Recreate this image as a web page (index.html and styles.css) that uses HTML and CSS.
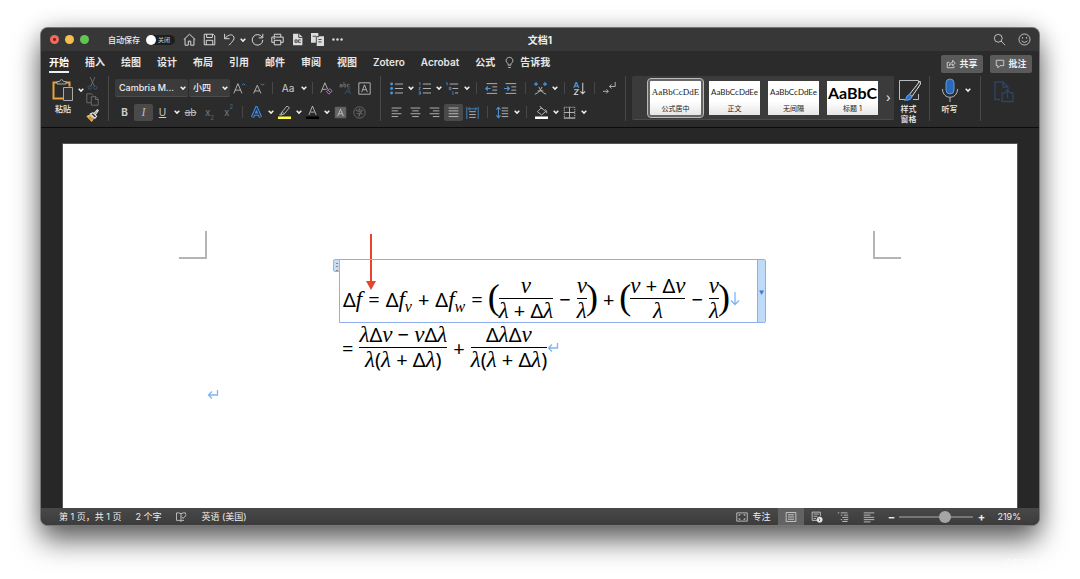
FILE: index.html
```html
<!DOCTYPE html>
<html lang="zh-CN">
<head>
<meta charset="utf-8">
<title>文档1</title>
<link rel="stylesheet" href="styles.css">
</head>
<body>
<svg class="sprite" aria-hidden="true">
  <symbol id="chev" viewBox="0 0 8 8"><path d="M1.700 2.800l2.300 2.300 2.300-2.300" fill="none" stroke="#f0f0f0" stroke-width="1.5"/></symbol>
  <symbol id="return" viewBox="0 0 12 12"><path d="M10.500 1v5H1.500M5 2.500L1.500 6 5 9.500" fill="none" stroke="#7db4f5" stroke-width="1.300"/></symbol>
</svg>
<div class="window">
  <header class="titlebar">
    <div class="lights"><i class="light red"></i><i class="light yellow"></i><i class="light green"></i></div>
    <label class="autosave">自动保存 <span class="toggle"><input type="checkbox" aria-label="自动保存"><span>关闭</span></span></label>
    <div class="quick">
      <button aria-label="主页"><svg viewBox="0 0 16 16"><path d="M1 8L8 1.500 15 8M2.500 7v8h4V10h3v5h4V7"/></svg></button>
      <button aria-label="保存"><svg viewBox="0 0 16 16"><path d="M1.500 1.500h11l2 2v11h-13zM4.500 1.500v4h7V1.500M4 14.500v-5.500h8v5.500"/></svg></button>
      <button aria-label="撤销"><svg viewBox="0 0 16 16"><path d="M2 1v6h6M2 7C6 2.500 10 1 12.500 3.500 15.500 7 12 10 7.500 15"/></svg></button>
      <button class="drop" aria-label="撤销选项"><svg><use href="#chev"/></svg></button>
      <button aria-label="重做"><svg viewBox="0 0 16 16"><path d="M13.500 5A6.500 6.500 0 1 0 14.500 8.500M14.500 1v5H9.500"/></svg></button>
      <button aria-label="打印"><svg viewBox="0 0 16 16"><path d="M4 5V1.500h8v3.500M4 11.500H1V5h14v6.500H12M4 9h8v5.500H4zM3 7h2"/></svg></button>
      <button aria-label="导出"><svg viewBox="0 0 16 16"><path class="solid" d="M2.500 1H10l4 4v10H2.500z"/><path stroke="#444" d="M9.500 1v4.500h4.500M5 8.500h2.500v3H5zM9 8.500h3M9 11.500h3M9 8.500v3"/></svg></button>
      <button aria-label="比较"><svg viewBox="0 0 16 16"><path class="solid" d="M0 0h9v4h7v12H7v-4H0z"/><path stroke="#444" d="M6.500 13V4.500H10M2 4h4M9 8h4M9 11h4"/></svg></button>
      <button aria-label="更多"><svg viewBox="0 0 16 16"><g class="solid"><circle cx="3" cy="8" r="1.500"/><circle cx="8" cy="8" r="1.500"/><circle cx="13" cy="8" r="1.500"/></g></svg></button>
    </div>
    <h1>文档1</h1>
    <div class="tools">
      <button aria-label="搜索"><svg viewBox="0 0 16 16"><circle cx="6.500" cy="6.500" r="4.800"/><path d="M10 10l5 5"/></svg></button>
      <button aria-label="反馈"><svg viewBox="0 0 16 16"><circle cx="8" cy="8" r="6.800"/><path d="M4.500 9.500q3.500 4 7 0M5.500 5v2M10.500 5v2"/></svg></button>
    </div>
  </header>

  <nav class="tabs">
    <a href="#" class="active">开始</a><a href="#">插入</a><a href="#">绘图</a><a href="#">设计</a><a href="#">布局</a><a href="#">引用</a><a href="#">邮件</a><a href="#">审阅</a><a href="#">视图</a><a href="#">Zotero</a><a href="#">Acrobat</a><a href="#">公式</a>
    <a href="#" class="tell"><svg viewBox="0 0 10 14"><path d="M3.500 10V8.500C1 6.500 1 4.500 1.500 3.500 3 .5 7 .5 8.500 3.500 9 4.500 9 6.500 6.500 8.500V10zM3.500 12.500h3"/></svg>告诉我</a>
    <div class="actions">
      <button><svg viewBox="0 0 12 12"><path d="M4 4H1.500v6.500h8V8M4 8c0-3 2-4 4-4V1.500L11 5 8 8V6C6 6 5 7 4 8z"/></svg>共享</button>
      <button><svg viewBox="0 0 12 12"><path d="M1.500 1.500h9v6.500H6L3.500 10.500V8h-2z"/></svg>批注</button>
    </div>
  </nav>

  <section class="ribbon">
    <div class="clipboard">
      <button class="big" aria-label="粘贴"><svg viewBox="0 0 24 24"><path d="M6 4.500H2.500v16H12M15 4.500h3.500v4" stroke="#e9a13b" stroke-width="2"/><path d="M6 6V3.500h2.500q2-4 4 0H15V6zM12.500 9.500h9v13h-9z" fill="#333" stroke="#aaa"/></svg><span>粘贴</span></button>
      <button class="drop" aria-label="粘贴选项"><svg><use href="#chev"/></svg></button>
      <div class="stack">
        <button aria-label="剪切"><svg viewBox="0 0 16 16"><path stroke="#777" d="M5 0l5 11M11 0L6 11"/><g stroke="#45617c"><circle cx="4.500" cy="13" r="2"/><circle cx="11.500" cy="13" r="2"/></g></svg></button>
        <button aria-label="复制"><svg viewBox="0 0 16 16"><path stroke="#777" d="M6 12H1V1h6l2 2M6.500 4.500H12l3 3v7.500H6.500zM11.500 4.500V8H15"/></svg></button>
        <button aria-label="格式刷"><svg viewBox="0 0 16 16"><path fill="#efb75f" stroke="#efb75f" d="M1 9l5-2.500 4 4-3 5z"/><path stroke="#ddd" stroke-width="1.500" d="M5.500 6l5.500 5.500L13 9 8.500 4.500zM10 5.500L14 1l1 1-3.500 5"/><path stroke="#553a14" d="M4 11l2-1M6 13l2-2"/></svg></button>
      </div>
    </div>
    <i class="divider"></i>

    <div class="group font">
      <div class="row">
        <label class="combo family"><select aria-label="字体"><option>Cambria M...</option></select><svg><use href="#chev"/></svg></label>
        <label class="combo size"><select aria-label="字号"><option>小四</option></select><svg><use href="#chev"/></svg></label>
        <button aria-label="增大字号"><svg viewBox="0 0 16 16"><path d="M1 14L6 2l5 12M2.500 10h7"/><path class="blue" d="M11 4l2-2 2 2"/></svg></button>
        <button aria-label="减小字号"><svg viewBox="0 0 16 16"><path d="M2 14L6.500 4 11 14M3.500 11h6"/><path class="blue" d="M11 2l2 2 2-2"/></svg></button>
        <i class="sep"></i>
        <button class="case">Aa</button><button class="drop" aria-label="大小写选项"><svg><use href="#chev"/></svg></button>
        <i class="sep"></i>
        <button aria-label="清除格式"><svg viewBox="0 0 16 16"><path d="M1 13L6 1l3.500 8M3 9h5"/><path stroke="#c58bd8" d="M8 12l4-4 3 3-4 4zM10 10l3 3"/></svg></button>
        <button class="dim" aria-label="拼音指南"><svg viewBox="0 0 16 16"><path d="M1 3h3v3H1V4.500h3M6 0v6h2.500V3H6M13 3h-2.500v3H13"/><path class="blue" d="M7 15l5-8 2 8M9 12h4"/></svg></button>
        <button aria-label="字符边框"><svg viewBox="0 0 16 16"><path d="M1 1h14v14H1zM4.500 12.500L8 3.500l3.500 9M6 9.500h4"/></svg></button>
      </div>
      <div class="row">
        <button class="bold">B</button><button class="italic on">I</button><button class="under">U</button><button class="drop" aria-label="下划线选项"><svg><use href="#chev"/></svg></button>
        <button class="strike">ab</button>
        <button class="script">x<sub>2</sub></button><button class="script">x<sup>2</sup></button>
        <i class="sep"></i>
        <button aria-label="文本效果"><svg viewBox="0 0 16 16"><path d="M3 14L8 2.500 13 14M5 10h6" stroke="#3f8fe0" stroke-width="4"/><path d="M3 14L8 2.500 13 14M5 10h6" stroke="#253648" stroke-width="1.500"/></svg></button><button class="drop" aria-label="文本效果选项"><svg><use href="#chev"/></svg></button>
        <button aria-label="突出显示"><svg viewBox="0 0 16 16"><path d="M4 8.500L11 0l3 2-6.500 8-3 .5zM5.500 7.500l2 2M4 9L2 11h3"/><path d="M0 14.500h16" stroke="#ffff45" stroke-width="3"/></svg></button><button class="drop" aria-label="突出显示选项"><svg><use href="#chev"/></svg></button>
        <button aria-label="字体颜色"><svg viewBox="0 0 16 16"><path d="M3.500 11L8 0l4.500 11M5.500 7.500h5"/><path d="M0 14.500h16" stroke="#000" stroke-width="3"/></svg></button><button class="drop" aria-label="字体颜色选项"><svg><use href="#chev"/></svg></button>
        <button aria-label="字符底纹"><svg viewBox="0 0 16 16"><path fill="#666" stroke="#666" d="M1.500 1.500h13v13h-13z"/><path d="M4.500 12.500L8 4l3.500 8.500M6 9.500h4"/></svg></button>
        <button class="dim" aria-label="带圈字符"><svg viewBox="0 0 16 16"><circle cx="8" cy="8" r="7"/><path d="M8 3v2M4 6.500V5h8v1.500M5.500 7h5L8 9v3.500L6.500 12M4 9.500h8"/></svg></button>
      </div>
    </div>
    <i class="divider"></i>

    <div class="group para">
      <div class="row">
        <button aria-label="项目符号"><svg viewBox="0 0 16 16"><path d="M6 2.500h10M6 8h10M6 13.500h10"/><g fill="#4b93d9" stroke="none"><circle cx="2" cy="2.500" r="1.800"/><circle cx="2" cy="8" r="1.800"/><circle cx="2" cy="13.500" r="1.800"/></g></svg></button><button class="drop" aria-label="项目符号选项"><svg><use href="#chev"/></svg></button>
        <button aria-label="编号"><svg viewBox="0 0 16 16"><path d="M6 2.500h10M6 8h10M6 13.500h10"/><path class="blue" d="M1 1h1.500v3M1 6.500h2L1 9.500h2M1 12h2v3H1M1 13.500h2"/></svg></button><button class="drop" aria-label="编号选项"><svg><use href="#chev"/></svg></button>
        <button aria-label="多级列表"><svg viewBox="0 0 16 16"><path d="M4.500 2.500H15M8 8h7M11 13.500h4"/><path class="blue" d="M0 1h1.500v3M4 6.500h2v3H4zM8.500 11.500V16"/></svg></button><button class="drop" aria-label="多级列表选项"><svg><use href="#chev"/></svg></button>
        <i class="sep"></i>
        <button aria-label="减少缩进"><svg viewBox="0 0 16 16"><path d="M2 2h13M9 6h6M9 10h6M2 14h13"/><path class="blue" stroke-width="1.500" d="M7 8H1M3.500 5.500L1 8l2.500 2.500"/></svg></button>
        <button aria-label="增加缩进"><svg viewBox="0 0 16 16"><path d="M2 2h13M9 6h6M9 10h6M2 14h13"/><path class="blue" stroke-width="1.500" d="M0 8h6.500M4 5.500L6.500 8 4 10.500"/></svg></button>
        <i class="sep"></i>
        <button aria-label="中文版式"><svg viewBox="0 0 16 16"><path d="M1 15q6-2 9-9M6 6q3 7 9 9M4.500 11h7"/><path class="blue" stroke-width="1.500" d="M0 2.500h5M2.500 0v5M11 2.500h5M13.500 0v5"/></svg></button><button class="drop" aria-label="版式选项"><svg><use href="#chev"/></svg></button>
        <i class="sep"></i>
        <button aria-label="排序"><svg viewBox="0 0 16 16"><path class="blue" stroke-width="1.500" d="M1 7l3-7 3 7M2.500 5h3"/><path stroke-width="1.300" d="M1.500 9.500h5L1.500 15.500h5M12 1v13.500M9 11.500l3 3 3-3"/></svg></button>
        <i class="sep"></i>
        <button aria-label="显示编辑标记"><svg viewBox="0 0 16 16"><path d="M15 0v5.500H8M10.500 3L8 5.500 10.500 8M0 11.500h6.500M4 9l2.500 2.500L4 14"/></svg></button>
      </div>
      <div class="row">
        <button aria-label="左对齐"><svg viewBox="0 0 16 16"><path d="M2 2.500h12M2 6h8M2 9.500h12M2 13h8"/></svg></button>
        <button aria-label="居中"><svg viewBox="0 0 16 16"><path d="M2 2.500h12M4 6h8M2 9.500h12M4 13h8"/></svg></button>
        <button aria-label="右对齐"><svg viewBox="0 0 16 16"><path d="M2 2.500h12M6 6h8M2 9.500h12M6 13h8"/></svg></button>
        <button class="on" aria-label="两端对齐"><svg viewBox="0 0 16 16"><path d="M2 2.500h12M2 6h12M2 9.500h12M2 13h12"/></svg></button>
        <button aria-label="分散对齐"><svg viewBox="0 0 16 16"><path d="M4 7h8M4 10.500h8M4 14h8"/><path class="blue" d="M1 1v15M15 1v15M3 3.500h10M5 1.500l-2 2 2 2M11 1.500l2 2-2 2"/></svg></button>
        <i class="sep"></i>
        <button aria-label="行距"><svg viewBox="0 0 16 16"><path d="M7 2.500h8M7 6h8M7 9.500h8M7 13h8"/><path class="blue" stroke-width="1.300" d="M3 1.500v13M.5 4.500L3 1.500l2.500 3M.5 11.500l2.500 3 2.500-3"/></svg></button><button class="drop" aria-label="行距选项"><svg><use href="#chev"/></svg></button>
        <i class="sep"></i>
        <button aria-label="底纹"><svg viewBox="0 0 16 16"><path d="M3 7L8 2l5 5-5 4zM6 0l3 4M12.500 4q2.500 2 2 5"/><path d="M0 14.500h16" stroke="#fff" stroke-width="3"/></svg></button><button class="drop" aria-label="底纹选项"><svg><use href="#chev"/></svg></button>
        <button aria-label="边框"><svg viewBox="0 0 16 16"><path d="M1.500 1.500h13v13h-13z" stroke-dasharray="1.500 1"/><path d="M8 1.500v13M1.500 8h13M1 15h14"/></svg></button><button class="drop" aria-label="边框选项"><svg><use href="#chev"/></svg></button>
      </div>
    </div>
    <i class="divider"></i>

    <div class="styles">
      <div class="gallery">
        <button class="card chosen"><b class="serif">AaBbCcDdE</b><span>公式居中</span></button>
        <button class="card"><b>AaBbCcDdEe</b><span>正文</span></button>
        <button class="card"><b>AaBbCcDdEe</b><span>无间隔</span></button>
        <button class="card"><b class="heading">AaBbC</b><span>标题 1</span></button>
        <button class="next" aria-label="更多样式">›</button>
      </div>
      <button class="big pane"><svg viewBox="0 0 24 24"><path d="M21.500 10V2.500h-19v19h6M16 21.500h5.500V16" stroke="#bbb"/><path d="M12 17L23 3l.5 3L15 18.500z" stroke="#ddd" fill="#333"/><path d="M7 22q3-1 3-4 3-3 5 0 0 5-8 4z" fill="#2f74c8" stroke="#6aa6ec"/></svg><span>样式<br>窗格</span></button>
    </div>
    <i class="divider"></i>
    <div class="dictate">
      <button class="big"><svg viewBox="0 0 24 24"><rect x="8" y="1" width="8" height="15" rx="4" fill="#2b68b8" stroke="#5d9be0"/><path d="M4.500 11c0 11 15 11 15 0M12 19.500V24" stroke="#bbb"/></svg><span>听写</span></button>
      <button class="drop" aria-label="听写选项"><svg><use href="#chev"/></svg></button>
    </div>
    <i class="divider"></i>
    <button class="big export" aria-label="创建并共享"><svg viewBox="0 0 24 24"><path stroke="#2c4468" stroke-width="1.300" d="M8 20.500H3V3h8l5 5v3M11 3v5h5M13 14h-3v8.500h11V14h-3M15.500 19v-8M13 13.500l2.500-2.500 2.500 2.500"/></svg></button>
  </section>

  <main class="workspace">
    <article class="page">
      <div class="marks"><i class="mark left"></i><i class="mark right"></i></div>
      <div class="equation">
        <svg class="arrow" viewBox="0 0 10 56"><path d="M5 0v50" stroke="#e8432d" stroke-width="2"/><path d="M0 47h10L5 56z" fill="#e8432d"/></svg>
        <div class="frame">
          <button class="grip" aria-label="移动公式">⋮</button>
          <div class="line">
            <span>Δ<i>f</i></span><span>=</span><span>Δ<i>f</i><sub>v</sub></span><span>+</span><span>Δ<i>f</i><sub>w</sub></span><span>=</span>
            <span class="fence"><span class="paren">(</span><span class="frac"><i>v</i><span><i>λ</i> + Δ<i>λ</i></span></span><span class="minus">−</span><span class="frac"><i>v</i><i>λ</i></span><span class="paren">)</span></span>
            <span>+</span>
            <span class="fence"><span class="paren">(</span><span class="frac"><span><i>v</i> + Δ<i>v</i></span><i>λ</i></span><span class="minus">−</span><span class="frac"><i>v</i><i>λ</i></span><span class="paren">)</span></span>
            <svg class="down" viewBox="0 0 12 14"><path d="M6 0v12.500M2 8.500l4 4 4-4" fill="none" stroke="#7db4f5" stroke-width="1.300"/></svg>
          </div>
          <button class="menu" aria-label="公式选项">▼</button>
        </div>
        <div class="line second">
          <span>=</span><span class="frac"><span><i>λ</i>Δ<i>v</i> − <i>v</i>Δ<i>λ</i></span><span><i>λ</i>(<i>λ</i> + Δ<i>λ</i>)</span></span><span>+</span><span class="frac"><span>Δ<i>λ</i>Δ<i>v</i></span><span><i>λ</i>(<i>λ</i> + Δ<i>λ</i>)</span></span><svg class="ret"><use href="#return"/></svg>
        </div>
      </div>
      <svg class="ret"><use href="#return"/></svg>
    </article>
  </main>

  <footer class="status">
    <span>第 1 页，共 1 页</span><span>2 个字</span>
    <button aria-label="校对"><svg viewBox="0 0 16 16"><path d="M8 13.500V3.500Q5 2 2 2.500v10h5l1 1.500 1-1.500h3M8 3.500q3-1.500 6-1v2M9 7.500l2 2.500 4-5"/></svg></button>
    <span>英语 (美国)</span>
    <div class="views">
      <button class="focus"><svg viewBox="0 0 16 16"><path d="M1 2.500h14v11H1zM4 6.500V5h2M10 5h2v1.500M12 9.500V11h-2M6 11H4V9.500"/></svg>专注</button>
      <button class="view on" aria-label="页面视图"><svg viewBox="0 0 16 16"><path d="M1.500 2h13v12h-13zM4 5h8M4 8h8M4 11h8"/></svg></button>
      <button class="view" aria-label="Web 版式"><svg viewBox="0 0 16 16"><path d="M8 12.500H1.500v-11h11v5M3.500 4h7M3.500 7h5M3.500 10h3"/><circle cx="11.500" cy="11.500" r="3.500" fill="#eee"/><path stroke="#444" d="M10 10l2 1.500-1 2"/></svg></button>
      <button class="view" aria-label="大纲"><svg viewBox="0 0 16 16"><path d="M1 2.500h2M5 2.500h9M5 5.500h2M9 5.500h6M7 8.500h8M5 11.500h2M9 11.500h6M7 14h7"/></svg></button>
      <button class="view" aria-label="草稿"><svg viewBox="0 0 16 16"><path d="M1 2.500h14M1 5.500h9M1 8.500h14M1 11.500h14M1 14.500h9"/></svg></button>
      <div class="zoom"><button>−</button><input type="range" min="0" max="100" value="64" aria-label="缩放"><button>+</button></div>
      <span class="percent">219%</span>
    </div>
  </footer>
</div>
<span class="watermark">CSDN @</span>
</body>
</html>
```

FILE: styles.css
```css
* { box-sizing: border-box; }
body {
  margin: 0;
  min-height: 100vh;
  padding: 28px 41px 54px;
  display: flex;
  background: #fff;
  overflow: hidden;
  font-family: Inter, "Noto Sans CJK SC", sans-serif;
  font-size: 8px;
  color: #eee;
}
.sprite { position: absolute; width: 0; height: 0; }
button {
  margin: 0; padding: 0; border: 0;
  background: none; color: inherit; font: inherit;
  display: flex; align-items: center; justify-content: center;
}
svg { display: block; flex: none; fill: none; stroke: #ccc; }
.solid { fill: #ddd; stroke: none; }
.blue { stroke: #4b93d9; }
.dim { opacity: .45; }

.window {
  flex: 1;
  min-width: 0;
  display: flex;
  flex-direction: column;
  border-radius: 7px;
  overflow: hidden;
  background: #272727;
  box-shadow: 0 0 0 1px #777, 0 16px 28px rgba(0, 0, 0, .58), 0 0 22px rgba(0, 0, 0, .22);
}

/* Title bar */
.titlebar {
  height: 23px;
  display: grid;
  grid-template-columns: auto auto 1fr auto;
  align-items: center;
  padding: 0 8px 0 9px;
  background: #373737;
  position: relative;
}
.lights { display: flex; gap: 6px; }
.light { width: 9px; height: 9px; border-radius: 50%; }
.red { background: radial-gradient(circle, #8b1a12 0 1px, #ee6a5f 2px); }
.yellow { background: #f5bf4f; }
.green { background: #61c554; }
.autosave { display: flex; align-items: center; gap: 6px; margin-left: 19px; font-weight: 500; }
.toggle { display: flex; align-items: center; width: 29px; height: 10px; border-radius: 5px; background: #1e1e1e; color: #bbb; font-size: 6px; gap: 2px; }
.toggle input { appearance: none; margin: 0; width: 10px; height: 10px; border-radius: 50%; background: #fff; }
.quick { display: flex; margin-left: 4px; }
.quick button { width: 20px; height: 20px; }
.quick svg { width: 13px; height: 13px; stroke-width: 1.2; stroke: #ddd; }
.quick .drop { width: 8px; }
.drop svg, .quick .drop svg { width: 8px; height: 8px; }
h1 { position: absolute; left: 0; right: 0; margin: 0; text-align: center; font-size: 10px; font-weight: 700; pointer-events: none; }
.tools { display: flex; gap: 12px; }
.tools svg { width: 13px; height: 13px; stroke: #ddd; }

/* Tabs */
.tabs { height: 25px; display: flex; align-items: center; gap: 16px; padding: 0 7px 0 8px; background: #2b2b2b; font-size: 10px; font-weight: 600; }
.tabs a { color: #e6e6e6; text-decoration: none; line-height: 15px; padding-bottom: 1px; white-space: nowrap; border-bottom: 2px solid transparent; }
.tabs .active { border-color: #eee; color: #fff; }
.tabs .tell { display: flex; align-items: center; gap: 6px; margin-left: -6px; }
.tell svg { width: 9px; height: 13px; }
.actions { margin-left: auto; display: flex; gap: 7px; }
.actions button { width: 42px; height: 18px; gap: 3px; border-radius: 2px; background: #5a5a5a; font-size: 9px; font-weight: 600; }
.actions svg { width: 10px; height: 10px; stroke: #ddd; }

/* Ribbon */
.ribbon { display: flex; gap: 6px; height: 52px; padding: 0 8px; background: #2b2b2b; border-bottom: 1px solid #0c0c0c; }
.divider { width: 1px; height: 45px; background: #484848; flex: none; }
.big { flex-direction: column; justify-content: flex-start; padding-top: 2px; line-height: 10px; font-weight: 500; }
.big svg { width: 24px; height: 24px; }
.big span { margin-top: 2px; }
.drop { width: 9px; }
.clipboard { width: 53px; display: flex; align-items: flex-start; }
.clipboard .big { width: 28px; }
.clipboard .drop { width: 7px; }
.clipboard .drop, .dictate .drop { height: 28px; }
.stack { display: flex; flex-direction: column; padding-left: 1px; gap: 1px; }
.stack button { width: 14px; height: 15px; }
.stack svg { width: 13px; height: 13px; }
.row { height: 24px; display: flex; align-items: center; }
.row button { width: 19px; height: 17px; font-size: 10px; }
.row .drop { width: 9px; }
.row svg { width: 13px; height: 13px; }
.row .drop svg, .combo svg { width: 8px; height: 8px; }
.row .on { background: #4a4a4a; border-radius: 2px; }
.sep { height: 12px; width: 1px; margin: 0 5px; background: #484848; }
.font .sep { margin: 0 4px; }
.combo { display: flex; align-items: center; height: 18px; padding: 0 1px 0 4px; border-radius: 2px; background: #3b3b3b; border-bottom: 1px solid #4c4c4c; }
.combo select { flex: 1; min-width: 0; appearance: none; border: 0; padding: 0; background: none; color: #eee; font: inherit; font-size: 9px; font-weight: 500; }
.family { width: 73px; margin-right: 1px; }
.size { width: 41px; }
.row .case { width: 22px; font-size: 10px; color: #ccc; }
.row .bold { font-weight: 700; color: #ccc; }
.row .italic { font-family: "Liberation Serif", serif; font-style: italic; font-size: 12px; color: #bbb; }
.row .under { text-decoration: underline; color: #ccc; }
.row .strike { text-decoration: line-through; color: #bbb; }
.row .script { color: #777; }
.script sub, .script sup { font-size: 6px; line-height: 6px; color: #3f6a94; }
.script sub { align-self: flex-end; }
.script sup { align-self: flex-start; }

.styles { display: flex; }
.gallery { display: flex; gap: 8px; align-items: center; width: 262px; height: 44px; padding-left: 18px; border-radius: 2px; background: #3b3b3b; border-bottom: 1px solid #4c4c4c; }
.card { width: 51px; height: 34px; flex: none; flex-direction: column; overflow: hidden; background: linear-gradient(#fff 60%, #e6e6e6); color: #222; font-size: 7px; line-height: 10px; }
.card b { height: 23px; line-height: 23px; font-family: Lato, sans-serif; font-weight: 400; font-size: 8px; }
.card .serif { font-family: "Liberation Serif", serif; font-size: 9px; }
.card .heading { font-weight: 700; font-size: 16px; color: #000; }
.chosen { box-shadow: 0 0 0 2px #666; outline: 1px solid #bbb; outline-offset: 2px; border-radius: 1px; }
.next { font-size: 12px; }
.pane { width: 29px; }
.dictate { display: flex; align-items: flex-start; width: 38px; }
.dictate .big { width: 27px; }
.export { margin-left: 5px; padding-top: 3px; }

/* Document */
.workspace { flex: 1; display: flex; padding: 16px 22px 0; }
.page { flex: 1; background: #fff; color: #000; padding: 87px 116px 0; outline: 1px solid #555; }
.marks { display: flex; justify-content: space-between; height: 28px; }
.mark { width: 28px; border-bottom: 2px solid #b4b4b4; }
.mark.left { border-right: 2px solid #b4b4b4; }
.mark.right { border-left: 2px solid #b4b4b4; }
.equation { position: relative; width: max-content; margin-left: 160px; font-family: "Noto Sans", sans-serif; font-size: 20px; }
.arrow { position: absolute; left: 27px; top: -25px; width: 10px; height: 56px; stroke: none; }
.frame { position: relative; height: 64px; width: 427px; display: flex; align-items: flex-end; border: 1px solid #8facec; border-radius: 0 2px 2px 0; }
.grip { position: absolute; left: -7px; top: -1px; width: 7px; height: 13px; border: 1px solid #8db9ee; border-radius: 2px 0 0 2px; background: #c5def8; color: #345; font-size: 10px; }
.menu { align-self: stretch; margin-left: auto; width: 8px; background: #bedcf7; border-left: 1px solid #8facec; color: #4a74cf; font-size: 8px; }
.line { display: flex; align-items: center; gap: 6px; padding-left: 3px; height: 46px; white-space: nowrap; }
.line i, .line sub { font-family: "Liberation Serif", serif; font-style: italic; font-size: 23px; }
.line sub { font-size: 16px; line-height: 10px; }
.fence { display: flex; align-items: center; }
.paren { width: 10px; display: flex; justify-content: center; font-family: "Liberation Serif", serif; font-size: 36px; line-height: 40px; height: 44px; }
.minus { padding: 0 6px; }
.frac { display: flex; flex-direction: column; align-items: center; }
.frac > * { line-height: 23px; height: 23px; }
.frac > :first-child { align-self: stretch; text-align: center; border-bottom: 1px solid #000; line-height: 19px; }
.down { width: 12px; height: 14px; margin-left: -6px; }
.second { margin-top: 2px; }
.ret { width: 12px; height: 12px; }
.page > .ret { margin: 18px 0 0 28px; }
.second .ret { margin-left: -6px; }

/* Status bar */
.status { height: 17px; display: flex; align-items: center; gap: 14px; padding: 0 18px; background: linear-gradient(#484848, #3c3c3c); font-size: 9px; white-space: nowrap; }
.status svg { width: 12px; height: 12px; stroke: #ddd; }
.views { margin-left: auto; display: flex; align-items: center; height: 17px; }
.focus { gap: 4px; margin-right: 8px; }
.view { width: 26px; height: 17px; }
.view.on { background: #626262; }
.zoom { display: flex; align-items: center; gap: 4px; margin-left: 5px; }
.zoom button { width: 8px; font-size: 11px; font-weight: 700; }
.zoom input { appearance: none; width: 74px; height: 12px; margin: 0; background: linear-gradient(#777, #777) center / 100% 2px no-repeat; }
.zoom input::-webkit-slider-thumb { appearance: none; width: 12px; height: 12px; border-radius: 50%; background: #a5a5a5; }
.percent { margin-left: 12px; }
.watermark { position: absolute; right: 34px; bottom: 10px; color: rgba(255, 255, 255, .7); font-size: 10px; }
```
